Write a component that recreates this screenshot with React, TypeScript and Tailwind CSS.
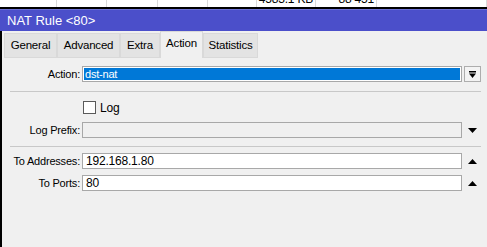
import React from "react";

const cols = [57, 50, 51, 50, 49, 59, 61, 110];

function Tab({ label, w, active }: { label: string; w: number; active?: boolean }) {
  return (
    <div
      className={`flex items-center justify-center border border-[#d9d9d9] ${
        active ? "mt-0 h-[27px] border-b-0 bg-[#f0f0f0] pb-[3px]" : "mt-[2px] h-[25px] bg-[#e3e3e3]"
      }`}
      style={{ width: w }}
    >
      {label}
    </div>
  );
}

function Tri({ up }: { up?: boolean }) {
  return (
    <svg width="9" height="5" viewBox="0 0 9 5">
      <polygon points={up ? "0,5 9,5 4.5,0" : "0,0 9,0 4.5,5"} fill="#000" />
    </svg>
  );
}

function Row({
  label,
  children,
  side,
}: {
  label: string;
  children: React.ReactNode;
  side?: React.ReactNode;
}) {
  return (
    <div className="flex h-[16px] items-center">
      <span className="w-[70px] shrink-0 text-right">{label}</span>
      <div className="ml-[2px] flex h-full flex-1">{children}</div>
      <div className="ml-[2px] flex h-full w-[17px] items-center justify-center">{side}</div>
    </div>
  );
}

export default function App() {
  return (
    <div
      className="h-[247px] w-[487px] overflow-hidden bg-[#f0f0f0] text-[11px] tracking-[-0.2px] text-black"
      style={{ fontFamily: '"Liberation Sans", Arial, sans-serif' }}
    >
      {/* table behind the window */}
      <div className="flex h-[7px] overflow-hidden bg-white">
        {cols.map((w, i) => (
          <div
            key={i}
            className="h-full shrink-0 border-r border-[#dadada] pr-[2px] text-right text-[12px] leading-[14px]"
            style={{ width: w }}
          >
            <div className="-mt-[8px]">{i === 5 ? "4583.1 KB" : i === 6 ? "88 451" : ""}</div>
          </div>
        ))}
      </div>
      <div className="h-[2px] bg-black" />

      {/* title bar */}
      <div className="flex h-[22px] items-center border-t border-[#6c70d6] bg-[#4b4fca] pl-[7px] text-[13px] tracking-normal text-white">
        NAT Rule &lt;80&gt;
      </div>

      <div className="flex h-full">
        <div className="w-[2px] shrink-0 bg-black" />
        <div className="flex-1">
          {/* tabs */}
          <div className="flex h-[27px] items-start pl-[2px] text-[11.5px]">
            <Tab label="General" w={53} />
            <Tab label="Advanced" w={63} />
            <Tab label="Extra" w={40} />
            <Tab label="Action" w={43} active />
            <Tab label="Statistics" w={55} />
          </div>

          <div className="pl-[8px] pr-[6px] pt-[8px]">
            <Row
              label="Action:"
              side={
                <div className="flex h-full w-full items-center justify-center border border-[#adadad] bg-[#f3f3f3]">
                  <svg width="7" height="7" viewBox="0 0 7 7">
                    <rect x="0" y="0" width="7" height="1.5" fill="#000" />
                    <polygon points="0,2.5 7,2.5 3.5,7" fill="#000" />
                  </svg>
                </div>
              }
            >
              <div className="flex-1 border border-[#a8a8a8] bg-white p-px">
                <div className="flex h-full items-center bg-[#0078d7] pl-[1px] text-white">dst-nat</div>
              </div>
            </Row>

            <div className="mt-[9px] h-px bg-[#c8c8c8]" />

            <div className="mt-[9px] flex h-[13px] items-center pl-[73px]">
              <div className="h-[13px] w-[13px] border border-[#5a5a5a] bg-white" />
              <span className="ml-[4px] text-[12px]">Log</span>
            </div>

            <div className="mt-[8px]">
              <Row label="Log Prefix:" side={<Tri />}>
                <div className="flex-1 border border-[#a8a8a8] bg-[#f0f0f0]" />
              </Row>
            </div>

            <div className="mt-[8px] h-px bg-[#c8c8c8]" />

            <div className="mt-[6px]">
              <Row label="To Addresses:" side={<Tri up />}>
                <div className="flex flex-1 items-center border border-[#a8a8a8] bg-white pl-[3px] text-[12px]">
                  192.168.1.80
                </div>
              </Row>
            </div>
            <div className="mt-[6px]">
              <Row label="To Ports:" side={<Tri up />}>
                <div className="flex flex-1 items-center border border-[#a8a8a8] bg-white pl-[3px] text-[12px]">
                  80
                </div>
              </Row>
            </div>
          </div>
        </div>
      </div>
    </div>
  );
}
